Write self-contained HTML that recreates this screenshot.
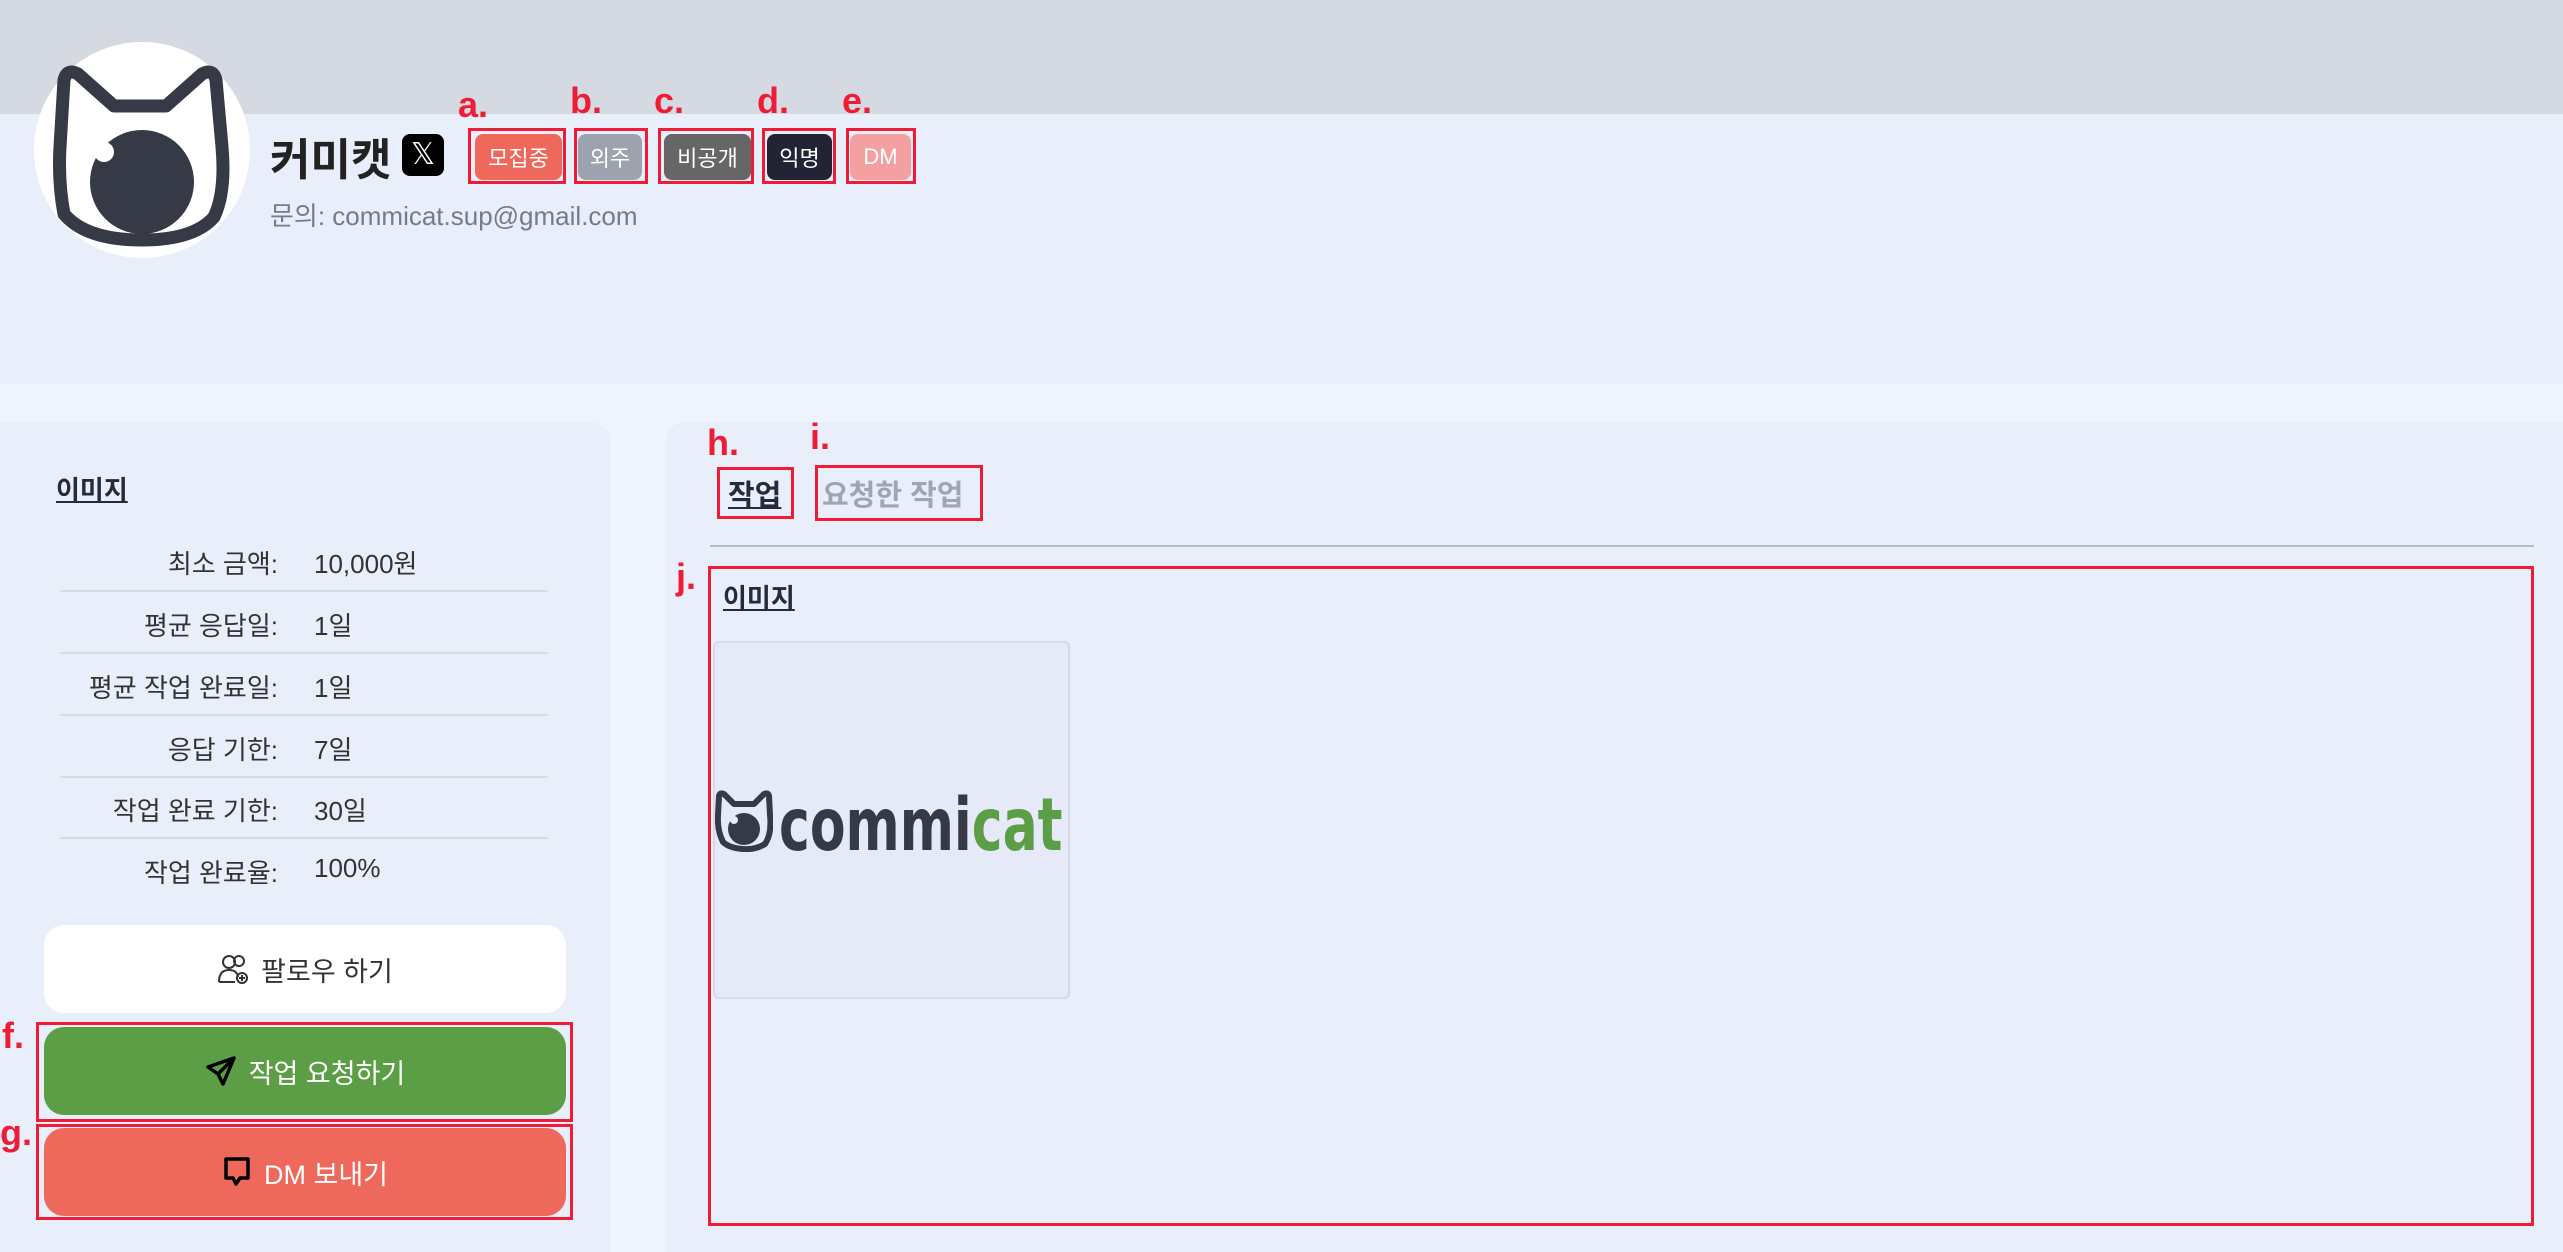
<!DOCTYPE html>
<html><head><meta charset="utf-8"><style>
*{margin:0;padding:0;box-sizing:border-box}
body{width:2563px;height:1237px;overflow:hidden;background:#f0f4fd;font-family:"Liberation Sans","Noto Sans CJK KR",sans-serif;position:relative;color:#262b38}
.a{position:absolute}
.red{position:absolute;border:3px solid #ee1c35}
.lbl{position:absolute;color:#ee1c35;font-size:36px;font-weight:bold}
.badge{position:absolute;top:134px;height:46px;border-radius:8px;color:#fff;font-size:22px;display:flex;align-items:center;justify-content:center}
.row{position:absolute;left:60px;width:488px;height:62px;font-size:26px;color:#333}
.row .k{position:absolute;right:270px;top:14px;white-space:nowrap}
.row .v{position:absolute;left:254px;top:14px}
.btn{position:absolute;left:44px;width:522px;height:88px;border-radius:20px;display:flex;align-items:center;justify-content:center;font-size:27px;gap:12px}
</style></head><body>
<div class="a" style="left:0;top:0;width:2563px;height:114px;background:#d5dae2"></div>
<div class="a" style="left:0;top:114px;width:2563px;height:270px;background:#e8eefa"></div>
<svg class="a" style="left:34px;top:42px" width="216" height="216" viewBox="0 0 216 216">
<circle cx="108" cy="108" r="108" fill="#fff"/>
<path d="M30 172 Q24 140 26 105 L30 38 Q33 26 44 32 L80 64 L132 64 L168 32 Q179 26 182 38 L188 105 Q192 150 180 175 Q160 198 108 198 Q52 198 30 172Z" fill="none" stroke="#363a47" stroke-width="13" stroke-linejoin="round"/>
<circle cx="108" cy="140" r="52" fill="#363a47"/>
<circle cx="70" cy="110" r="10" fill="#fff"/>
</svg>
<div class="a" style="left:270px;top:124px;font-size:44px;font-weight:bold;color:#222">커미캣</div>
<div class="a" style="left:402px;top:134px;width:42px;height:42px;background:#000;border-radius:8px;color:#fff;font-size:30px;text-align:center;line-height:42px;font-family:'DejaVu Sans',sans-serif">𝕏</div>
<div class="badge" style="left:475px;width:87px;background:#ee685c">모집중</div>
<div class="badge" style="left:578px;width:64px;background:#9ca2ae">외주</div>
<div class="badge" style="left:664px;width:87px;background:#666">비공개</div>
<div class="badge" style="left:767px;width:65px;background:#222435">익명</div>
<div class="badge" style="left:850px;width:61px;background:#f4a0a0">DM</div>
<div class="red" style="left:468px;top:128px;width:98px;height:56px"></div>
<div class="red" style="left:574px;top:128px;width:74px;height:56px"></div>
<div class="red" style="left:658px;top:128px;width:96px;height:56px"></div>
<div class="red" style="left:762px;top:128px;width:74px;height:56px"></div>
<div class="red" style="left:846px;top:128px;width:70px;height:56px"></div>
<div class="lbl" style="left:458px;top:84px">a.</div>
<div class="lbl" style="left:570px;top:80px">b.</div>
<div class="lbl" style="left:654px;top:80px">c.</div>
<div class="lbl" style="left:757px;top:80px">d.</div>
<div class="lbl" style="left:842px;top:80px">e.</div>
<div class="a" style="left:270px;top:196px;font-size:26px;color:#777b88">문의: commicat.sup@gmail.com</div>

<div class="a" style="left:0;top:422px;width:610px;height:830px;background:#e8eefa;border-radius:0 20px 0 0"></div>
<div class="a" style="left:56px;top:470px;font-size:26px;font-weight:bold;text-decoration:underline">이미지</div>
<div class="row" style="top:530px;border-bottom:2px solid #d6dae2"><span class="k">최소 금액:</span><span class="v">10,000원</span></div>
<div class="row" style="top:592px;border-bottom:2px solid #d6dae2"><span class="k">평균 응답일:</span><span class="v">1일</span></div>
<div class="row" style="top:654px;border-bottom:2px solid #d6dae2"><span class="k">평균 작업 완료일:</span><span class="v">1일</span></div>
<div class="row" style="top:716px;border-bottom:2px solid #d6dae2"><span class="k">응답 기한:</span><span class="v">7일</span></div>
<div class="row" style="top:777px;border-bottom:2px solid #d6dae2"><span class="k">작업 완료 기한:</span><span class="v">30일</span></div>
<div class="row" style="top:839px"><span class="k">작업 완료율:</span><span class="v">100%</span></div>
<div class="btn" style="top:925px;background:#fff;color:#333"><svg width="32" height="32" viewBox="0 0 32 32" fill="none" stroke="#333" stroke-width="2"><circle cx="12" cy="9" r="6"/><circle cx="22" cy="8" r="5"/><path d="M2 29 Q2 17 12 17 Q20 17 21 24 M2 29 H18"/><circle cx="25" cy="25" r="5"/><path d="M25 22v6M22 25h6"/></svg>팔로우 하기</div>
<div class="btn" style="top:1027px;background:#5c9e45;color:#fff"><svg width="32" height="32" viewBox="0 0 32 32" fill="none" stroke="#000" stroke-width="3.5" stroke-linejoin="round"><path d="M3 12 L29 3 L18 29 L13 19 Z M13 19 L29 3"/></svg>작업 요청하기</div>
<div class="btn" style="top:1128px;background:#ee685c;color:#fff"><svg width="30" height="32" viewBox="0 0 30 32" fill="none" stroke="#000" stroke-width="3.5" stroke-linejoin="round"><path d="M4 3 H26 V22 H18 L14 28 L11 22 H4 Z"/></svg>DM 보내기</div>
<div class="red" style="left:36px;top:1022px;width:537px;height:100px"></div>
<div class="red" style="left:36px;top:1124px;width:537px;height:96px"></div>
<div class="lbl" style="left:2px;top:1015px">f.</div>
<div class="lbl" style="left:0;top:1112px">g.</div>

<div class="a" style="left:665px;top:422px;width:1898px;height:830px;background:#e8eefa;border-radius:20px 0 0 0"></div>
<div class="a" style="left:728px;top:472px;font-size:29px;font-weight:bold;text-decoration:underline">작업</div>
<div class="a" style="left:822px;top:472px;font-size:29px;font-weight:bold;color:#a0a5b1">요청한 작업</div>
<div class="red" style="left:717px;top:467px;width:77px;height:52px"></div>
<div class="red" style="left:815px;top:465px;width:168px;height:56px"></div>
<div class="lbl" style="left:707px;top:422px">h.</div>
<div class="lbl" style="left:810px;top:416px">i.</div>
<div class="a" style="left:710px;top:545px;width:1824px;height:2px;background:#b8bcc6"></div>
<div class="red" style="left:708px;top:566px;width:1826px;height:660px"></div>
<div class="lbl" style="left:676px;top:556px">j.</div>
<div class="a" style="left:723px;top:578px;font-size:26px;font-weight:bold;text-decoration:underline">이미지</div>
<div class="a" style="left:713px;top:641px;width:357px;height:358px;background:#e6eaf8;border:2px solid #d6dae6;border-radius:6px"></div>
<svg class="a" style="left:715px;top:790px" width="58" height="62" viewBox="0 0 58 62"><path d="M8 52 Q2 40 3 25 L4 6 Q5 2 9 4 L19 14 L39 14 L49 4 Q53 2 54 6 L55 25 Q57 44 50 54 Q40 60 28 59 Q14 58 8 52Z" fill="none" stroke="#363a47" stroke-width="6" stroke-linejoin="round"/><circle cx="29" cy="39" r="16" fill="#363a47"/><circle cx="19" cy="30" r="4" fill="#e6eaf8"/></svg>
<div class="a" style="left:779px;top:784px;font-size:52px;font-weight:bold;color:#363a47;font-family:'DejaVu Sans',sans-serif;line-height:60px;transform:scaleY(1.4);transform-origin:0 0">commi<span style="color:#5c9e45">cat</span></div>
</body></html>
